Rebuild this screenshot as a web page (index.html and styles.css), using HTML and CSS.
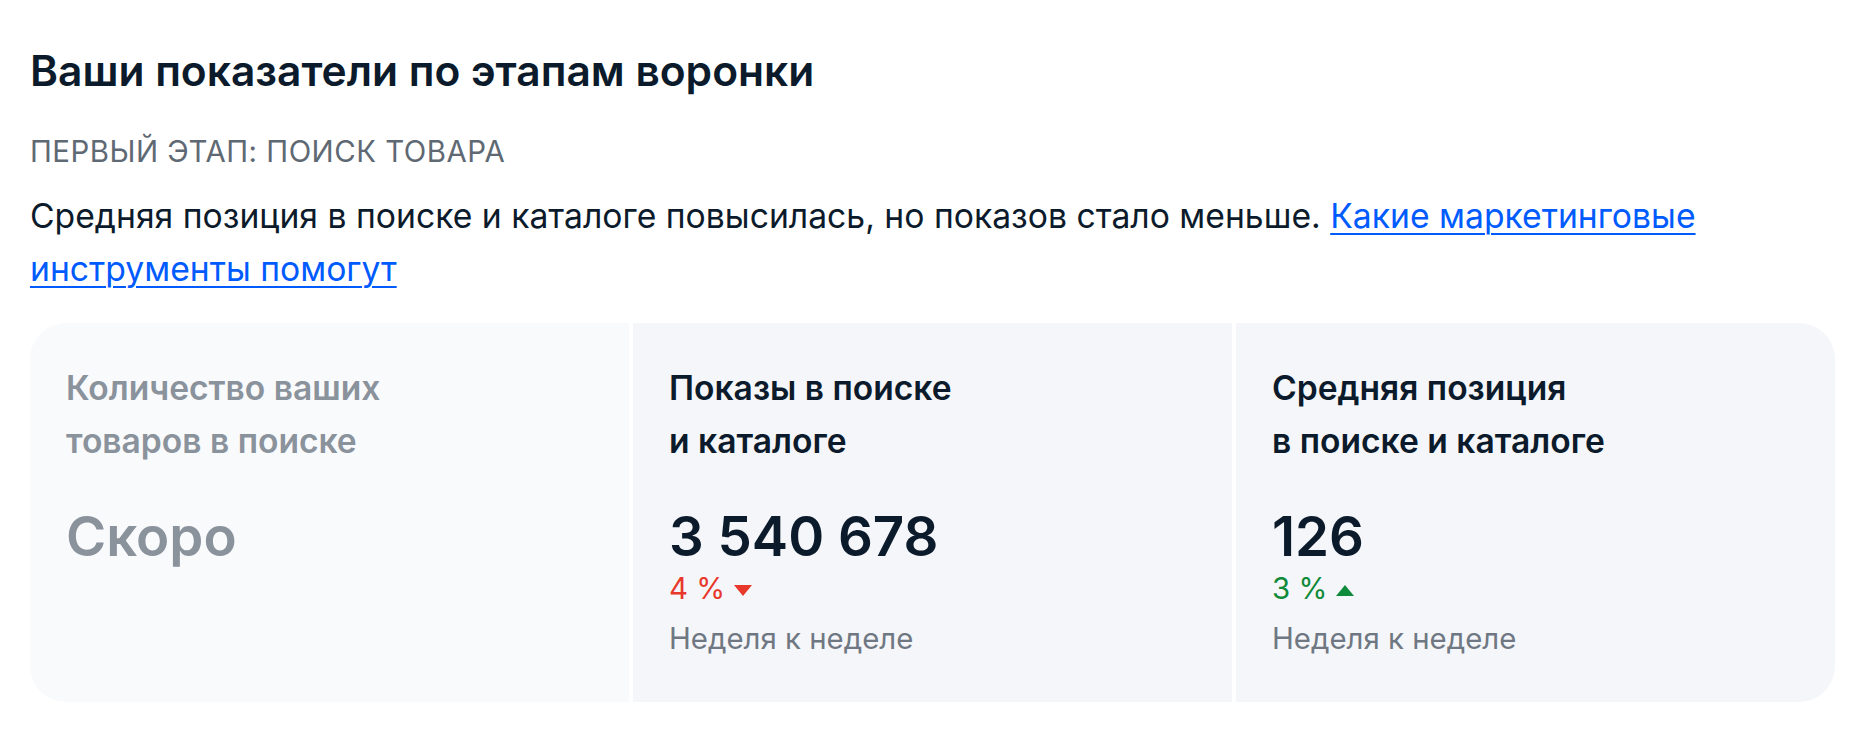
FILE: index.html
```html
<!DOCTYPE html>
<html lang="ru">
<head>
<meta charset="utf-8">
<title>Ваши показатели по этапам воронки</title>
<link rel="stylesheet" href="styles.css">
</head>
<body>
<main class="page">
  <h1 class="title">Ваши показатели по этапам воронки</h1>
  <div class="stage">Первый этап: поиск товара</div>
  <p class="lead">Средняя позиция в поиске и каталоге повысилась, но показов стало меньше. <a href="#" class="link">Какие маркетинговые инструменты помогут</a></p>
  <section class="metrics">
    <div class="metric metric--muted">
      <div class="metric__name">Количество ваших<br>товаров в поиске</div>
      <div class="metric__value">Скоро</div>
    </div>
    <div class="metric">
      <div class="metric__name">Показы в поиске<br>и каталоге</div>
      <div class="metric__value">3 540 678</div>
      <div class="metric__delta metric__delta--down">4 %<svg class="tri" width="18" height="11" viewBox="0 0 18 11"><path d="M0 0H18L9 11Z" fill="currentColor"/></svg></div>
      <div class="metric__note">Неделя к неделе</div>
    </div>
    <div class="metric">
      <div class="metric__name">Средняя позиция<br>в поиске и каталоге</div>
      <div class="metric__value">126</div>
      <div class="metric__delta metric__delta--up">3 %<svg class="tri" width="18" height="11" viewBox="0 0 18 11"><path d="M0 11H18L9 0Z" fill="currentColor"/></svg></div>
      <div class="metric__note">Неделя к неделе</div>
    </div>
  </section>
</main>
</body>
</html>
```
FILE: styles.css
```css
* { box-sizing: border-box; }
html, body { margin: 0; padding: 0; background: #ffffff; }
body {
  font-family: Inter, "Noto Sans", sans-serif;
  color: #0c1b2b;
}
.page {
  padding: 44px 26px 0 30px;
}
.title {
  margin: 0;
  font-size: 42.5px;
  line-height: 53px;
  font-weight: 600;
  color: #0c1b2b;
}
.stage {
  margin-top: 35px;
  font-size: 29.4px;
  line-height: 40px;
  text-transform: uppercase;
  letter-spacing: 0.5px;
  color: #5f6973;
}
.lead {
  margin: 17px 0 0;
  font-size: 33.7px;
  line-height: 53px;
  color: #0c1b2b;
}
.link {
  color: #005bff;
  text-decoration: underline;
  text-underline-offset: 5px;
  text-decoration-thickness: 2px;
}
.metrics {
  margin-top: 28px;
  display: grid;
  grid-template-columns: 1fr 1fr 1fr;
  gap: 4px;
  border-radius: 36px;
  overflow: hidden;
}
.metric {
  background: #f5f6fa;
  padding: 38px 36px 43px 36px;
  display: flex;
  flex-direction: column;
}
.metric--muted { background: #f9fafc; }
.metric__name {
  font-size: 33.6px;
  line-height: 53px;
  font-weight: 600;
  color: #0c1b2b;
}
.metric--muted .metric__name,
.metric--muted .metric__value { color: #8a929c; }
.metric__value {
  margin-top: 37px;
  font-size: 54.6px;
  line-height: 65px;
  font-weight: 600;
  color: #0c1b2b;
}
.metric__delta {
  display: flex;
  align-items: center;
  gap: 9px;
  font-size: 29.4px;
  line-height: 40px;
}
.metric__delta--down { color: #e8372b; }
.metric__delta--up { color: #0f8a3a; }
.tri { display: block; margin-top: 2px; }
.metric__note {
  margin-top: 10px;
  font-size: 29.4px;
  line-height: 40px;
  color: #6f7882;
}
```
